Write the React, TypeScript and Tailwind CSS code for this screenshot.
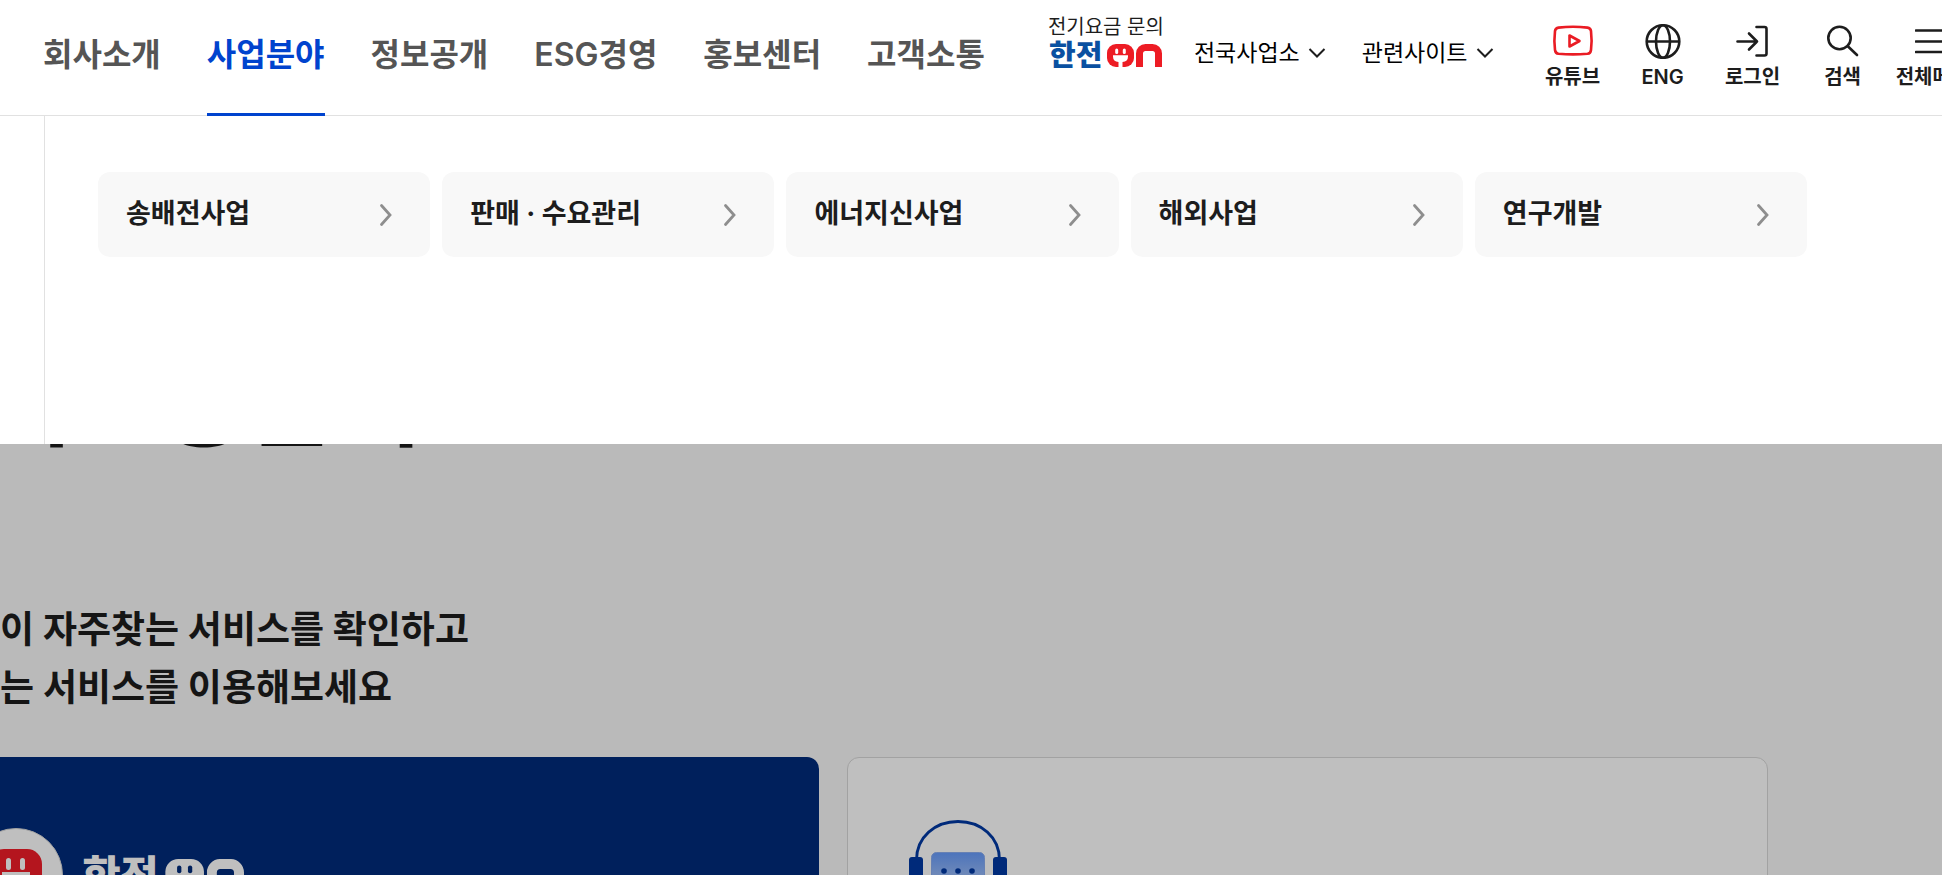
import React from "react";
import clsx from "clsx";

const gnb = ["회사소개", "사업분야", "정보공개", "ESG경영", "홍보센터", "고객소통"];
const activeMenu = "사업분야";

const subMenus = ["송배전사업", "판매 · 수요관리", "에너지신사업", "해외사업", "연구개발"];

const YoutubeIcon = () => (
  <svg width="42" height="36" viewBox="0 0 42 36" fill="none" stroke="#ea1c24" strokeWidth="2.6" strokeLinejoin="round">
    <path d="M6.5 4.6Q21 2.8 35.500 4.600Q38.600 5 39 8Q40.200 18 39 27Q38.600 30.400 35.500 30.800Q21 32 6.500 30.800Q3.400 30.400 3 27Q1.800 18 3 8Q3.400 5 6.500 4.600Z" />
    <path d="M17.500 12.500V23.500L27.500 18Z" />
  </svg>
);

const GlobeIcon = () => (
  <svg width="36" height="36" viewBox="0 0 36 36" fill="none" stroke="#1d1d1d" strokeWidth="2.6">
    <circle cx="18" cy="18.500" r="16.300" />
    <ellipse cx="18" cy="18.500" rx="7" ry="16.300" />
    <path d="M1.700 18.500H34.300" />
  </svg>
);

const LoginIcon = () => (
  <svg width="36" height="36" viewBox="0 0 36 36" fill="none" stroke="#1d1d1d" strokeWidth="2.6" strokeLinecap="round" strokeLinejoin="round">
    <path d="M21.500 4H29.500Q31.500 4 31.500 6V30.500Q31.500 32.500 29.500 32.500H21.500" />
    <path d="M2.500 18.500H22M14 10.500L22 18.500L14 26.500" />
  </svg>
);

const SearchIcon = () => (
  <svg width="36" height="36" viewBox="0 0 36 36" fill="none" stroke="#1d1d1d" strokeWidth="2.6" strokeLinecap="round">
    <circle cx="14.500" cy="15" r="11.200" />
    <path d="M22.800 23.300L32 32" />
  </svg>
);

const MenuIcon = () => (
  <svg width="36" height="36" viewBox="0 0 36 36" fill="none" stroke="#1d1d1d" strokeWidth="2.6" strokeLinecap="round">
    <path d="M1 7.500H35M1 18.500H35M1 29H35" />
  </svg>
);

const ArrowDown = () => (
  <svg width="18" height="12" viewBox="0 0 18 12" fill="none" stroke="#1d1d1d" strokeWidth="2">
    <path d="M1.500 2L9 9.500L16.500 2" />
  </svg>
);

const ArrowRight = () => (
  <svg width="14" height="24" viewBox="0 0 14 24" fill="none" stroke="#8e8e8e" strokeWidth="2.8" strokeLinecap="round">
    <path d="M2.500 2.500L11 12L2.500 21.500" />
  </svg>
);

const utils = [
  { label: "유튜브", icon: <YoutubeIcon /> },
  { label: "ENG", icon: <GlobeIcon /> },
  { label: "로그인", icon: <LoginIcon /> },
  { label: "검색", icon: <SearchIcon /> },
  { label: "전체메뉴", icon: <MenuIcon /> },
];

type LogoProps = {
  className: string;
  textColor: string;
  markColor: string;
  holeColor: string;
};

const HanjeonOnLogo: React.FC<LogoProps> = ({ className, textColor, markColor, holeColor }) => (
  <svg className={className} viewBox="0 0 114 25" overflow="visible">
    <text x="1" y="24" fontSize="29" fontWeight="900" fill={textColor}>
      한전
    </text>
    {/* plug mark */}
    <rect x="59" y="2" width="27" height="23" rx="9" fill={markColor} />
    <rect x="67.200" y="6.500" width="3" height="5.500" rx="1.500" fill={holeColor} />
    <rect x="74.800" y="6.500" width="3" height="5.500" rx="1.500" fill={holeColor} />
    <path d="M65 13.200H80V14.500Q80 19.500 74.500 20V25H70.500V20Q65 19.500 65 14.500Z" fill={holeColor} />
    {/* cable arch */}
    <svg x="88" y="2" width="26" height="23" viewBox="0 0 26 23">
      <rect x="3.500" y="3.500" width="19" height="40" rx="6" fill="none" stroke={markColor} strokeWidth="7" />
    </svg>
  </svg>
);

const PlugBadge = () => (
  <svg width="94" height="94" viewBox="0 0 94 94">
    <circle cx="47" cy="47" r="46.500" fill="#ffffff" stroke="#d8d8d8" />
    <rect x="20" y="21" width="53" height="53" rx="15" fill="#f01d28" />
    <rect x="37" y="30" width="5" height="12" rx="2.500" fill="#ffffff" />
    <rect x="51" y="30" width="5" height="12" rx="2.500" fill="#ffffff" />
    <path d="M33 44H61V50Q61 60 50 61V74H44V61Q33 60 33 50Z" fill="#ffffff" />
  </svg>
);

const HeadsetIcon = () => (
  <svg width="98" height="98" viewBox="0 0 98 98" fill="none">
    <defs>
      <linearGradient id="screen" x1="0" y1="0" x2="0" y2="1">
        <stop offset="0" stopColor="#669bfb" />
        <stop offset="1" stopColor="#c4d4f2" />
      </linearGradient>
    </defs>
    <path d="M7.500 40C7.500 17 26 1.500 49 1.500S90.500 17 90.500 40" stroke="#0038a3" strokeWidth="2.800" />
    <rect x="0" y="37" width="14" height="34" rx="3" fill="#0038a3" />
    <rect x="84" y="37" width="14" height="34" rx="3" fill="#0038a3" />
    <rect x="22.500" y="32.500" width="53" height="46" rx="5" fill="url(#screen)" stroke="#8aacf0" />
    <circle cx="35" cy="51" r="2.800" fill="#0038a3" />
    <circle cx="49" cy="51" r="2.800" fill="#0038a3" />
    <circle cx="63" cy="51" r="2.800" fill="#0038a3" />
  </svg>
);

const Header = () => (
  <header className="flex h-[116px] border-b border-[#e1e1e1] bg-white pl-[43px]">
    <nav className="flex shrink-0 gap-[46px]">
      {gnb.map((item) => (
        <a
          key={item}
          href="#"
          className={clsx(
            "-mb-px flex items-center border-b-3 pb-1 text-[32px] leading-none font-semibold",
            item === activeMenu ? "border-[#0043ce] text-[#0043ce]" : "border-transparent text-[#555555]"
          )}
        >
          {item}
        </a>
      ))}
    </nav>
    <div className="ml-[63px] flex shrink-0 items-start">
      <a href="#" className="mt-4 flex flex-col gap-1 text-[20px] leading-[22px] text-[#1d1d1d]">
        전기요금 문의
        <HanjeonOnLogo className="h-[25px] w-[114px]" textColor="#0a50a1" markColor="#ed1c24" holeColor="#ffffff" />
      </a>
      <button className="mt-[37px] ml-[30px] flex items-center gap-2 text-[23px] leading-8 text-black">
        전국사업소
        <ArrowDown />
      </button>
      <button className="mt-[37px] ml-9 flex items-center gap-2 text-[23px] leading-8 text-black">
        관련사이트
        <ArrowDown />
      </button>
    </div>
    <ul className="ml-[34px] flex shrink-0 pt-[23px]">
      {utils.map(({ label, icon }) => (
        <li key={label} className="w-[90px]">
          <a href="#" className="flex flex-col items-center gap-1.5 text-[20px] leading-6 font-semibold text-[#1d1d1d]">
            {icon}
            {label}
          </a>
        </li>
      ))}
    </ul>
  </header>
);

const MegaMenu = () => (
  <div className="bg-white pl-11">
    <div className="h-[328px] border-l border-[#e1e1e1] pt-14 pr-[135px] pl-[53px]">
      <ul className="grid grid-cols-5 gap-3">
        {subMenus.map((menu) => (
          <li key={menu}>
            <a
              href="#"
              className="flex h-[85px] items-center justify-between rounded-xl bg-[#f8f8f8] pr-[37px] pl-7 text-[27px] font-bold text-[#1d1d1d]"
            >
              {menu}
              <ArrowRight />
            </a>
          </li>
        ))}
      </ul>
    </div>
  </div>
);

const App: React.FC = () => {
  return (
    <div className="relative h-screen overflow-hidden bg-[#f8f8f8] font-['Inter','Noto_Sans_CJK_KR',sans-serif] text-[#1d1d1d]">
      <main className="mr-[174px] -ml-[102px] pt-[355px]">
        <h2 className="ml-[88px] text-[95px] leading-[100px] font-bold whitespace-nowrap">지로공급이</h2>
        <p className="mt-[146px] text-[37px] leading-[58px] font-bold">
          고객님이 자주찾는 서비스를 확인하고
          <br />
          원하시는 서비스를 이용해보세요
        </p>
        <div className="mt-10 grid grid-cols-2 gap-7">
          <a href="#" className="flex h-60 items-start gap-[18px] rounded-xl bg-[#002b7b] pt-[71px] pl-[71px]">
            <PlugBadge />
            <HanjeonOnLogo className="mt-7 h-9 w-[163px]" textColor="#ffffff" markColor="#ffffff" holeColor="#002b7b" />
          </a>
          <a href="#" className="h-60 rounded-xl border border-[#d8d8d8] bg-white pt-[62px] pl-[61px]">
            <HeadsetIcon />
          </a>
        </div>
      </main>
      <div className="absolute inset-0 bg-black/25" />
      <div className="absolute inset-x-0 top-0">
        <Header />
        <MegaMenu />
      </div>
    </div>
  );
};

export default App;
